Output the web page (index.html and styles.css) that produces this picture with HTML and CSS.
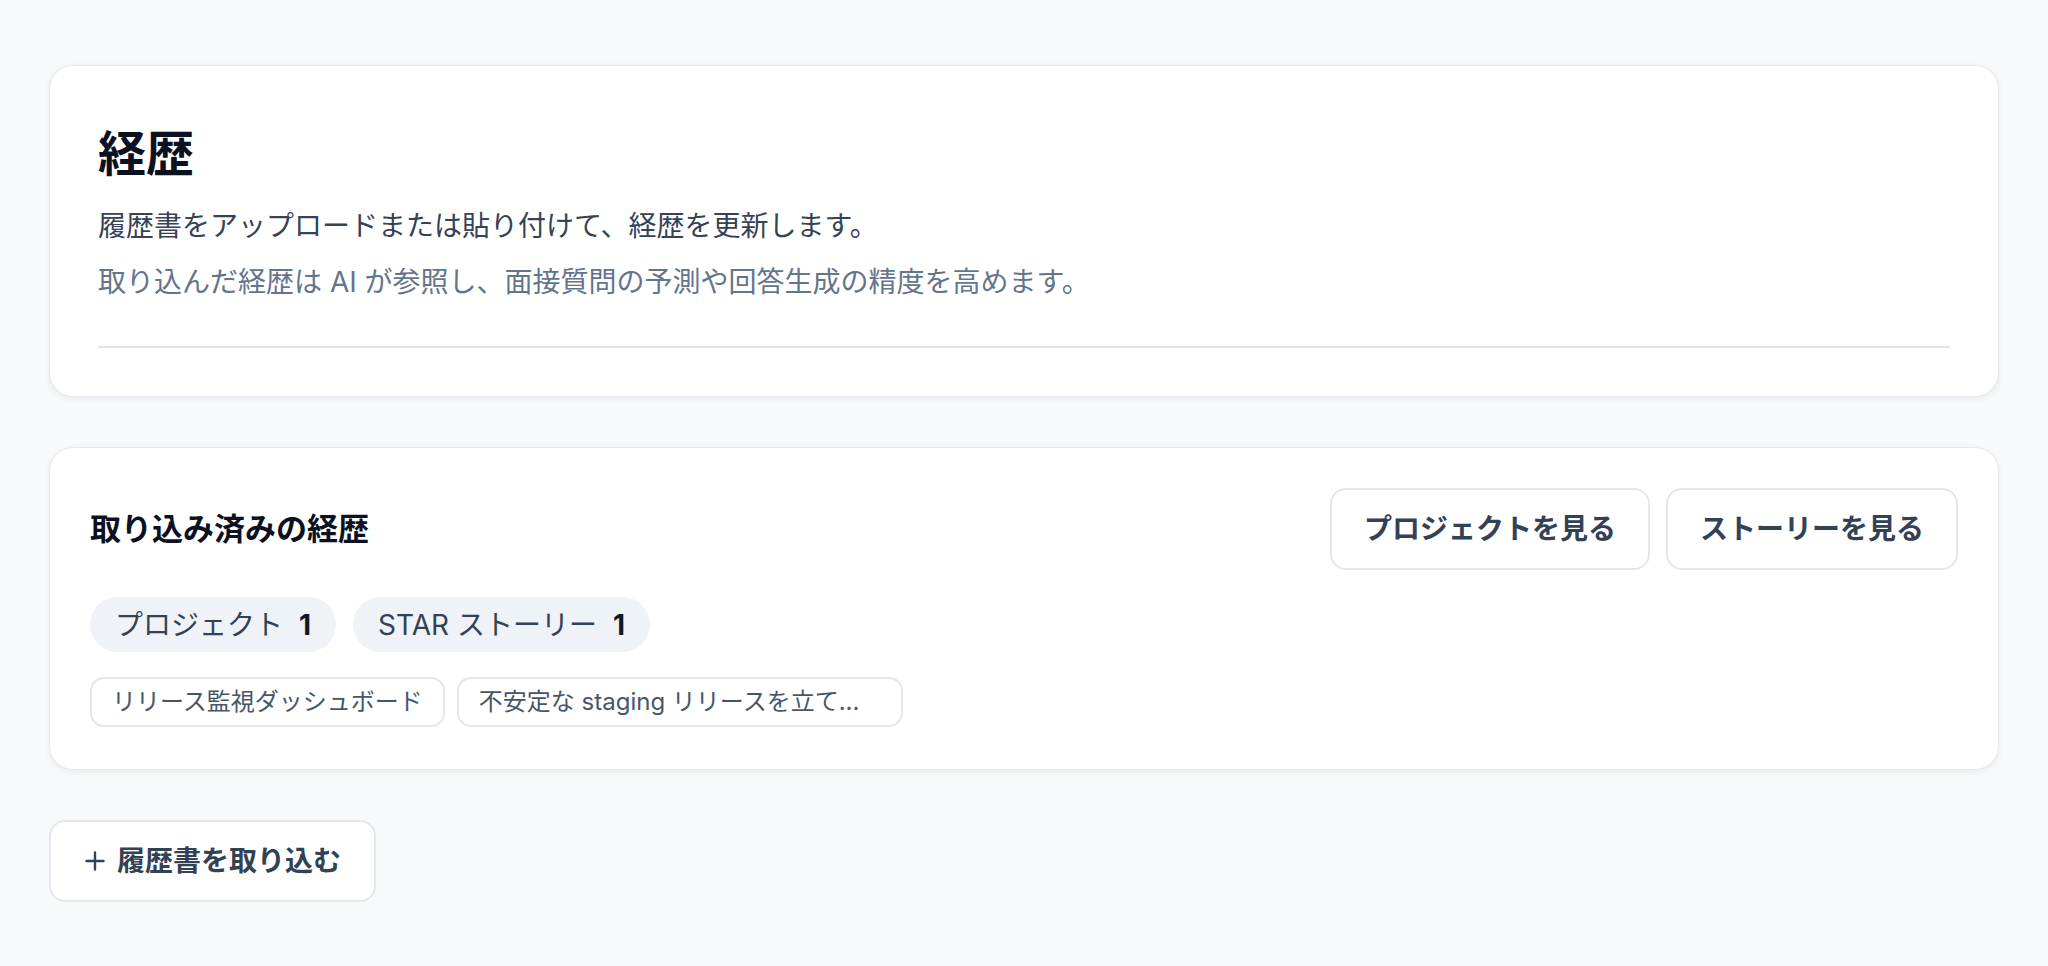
FILE: index.html
```html
<!DOCTYPE html>
<html lang="ja">
<head>
<meta charset="utf-8">
<title>経歴</title>
<link rel="stylesheet" href="styles.css">
</head>
<body>
<main class="page">
  <section class="card card--intro">
    <h1 class="title">経歴</h1>
    <p class="lead">履歴書をアップロードまたは貼り付けて、経歴を更新します。</p>
    <p class="note">取り込んだ経歴は AI が参照し、面接質問の予測や回答生成の精度を高めます。</p>
    <hr class="divider">
  </section>

  <section class="card card--imported">
    <div class="imported-head">
      <h2 class="subtitle">取り込み済みの経歴</h2>
      <div class="actions">
        <button class="btn">プロジェクトを見る</button>
        <button class="btn">ストーリーを見る</button>
      </div>
    </div>
    <div class="pills">
      <span class="pill">プロジェクト<span class="pill-count">1</span></span>
      <span class="pill">STAR ストーリー<span class="pill-count">1</span></span>
    </div>
    <div class="tags">
      <span class="tag">リリース監視ダッシュボード</span>
      <span class="tag tag--wide">不安定な staging リリースを立て...</span>
    </div>
  </section>

  <div class="footer-actions">
    <button class="btn btn--import"><svg class="plus" viewBox="0 0 20 20" width="20" height="20" aria-hidden="true"><path d="M10 1.5v17M1.5 10h17" stroke="currentColor" stroke-width="2.4" stroke-linecap="round" fill="none"/></svg>履歴書を取り込む</button>
  </div>
</main>
</body>
</html>
```

FILE: styles.css
```css
* {
  box-sizing: border-box;
}

html, body {
  margin: 0;
  padding: 0;
  background: #f8f9fb;
}

body {
  font-family: "Inter", "Noto Sans CJK JP", sans-serif;
  color: #0f172a;
}

.page {
  padding: 65px 49px 40px;
  display: flex;
  flex-direction: column;
  align-items: stretch;
}

.card {
  background: #ffffff;
  border: 1px solid #e5e8ee;
  border-radius: 24px;
  box-shadow: 0 2px 6px rgba(15, 23, 42, 0.07);
}

.card--intro {
  padding: 60px 48px 48px;
}

.title {
  margin: 0 0 20px;
  font-size: 48px;
  line-height: 56px;
  font-weight: 700;
  color: #0b1121;
}

.lead,
.note {
  margin: 0;
  font-size: 28px;
  line-height: 48px;
}

.lead {
  color: #364256;
}

.note {
  margin-top: 8px;
  color: #64748b;
}

.divider {
  margin: 40px 0 0;
  border: 0;
  height: 2px;
  background: #e2e6ec;
}

.card--imported {
  margin-top: 50px;
  padding: 40px 40px 42px;
}

.imported-head {
  display: flex;
  align-items: center;
  justify-content: space-between;
  margin-bottom: 27px;
}

.subtitle {
  margin: 0;
  font-size: 31px;
  line-height: 42px;
  font-weight: 700;
  color: #0b1121;
}

.actions {
  display: flex;
  gap: 16px;
}

.btn {
  font-family: inherit;
  font-size: 28px;
  line-height: 42px;
  font-weight: 600;
  color: #334155;
  background: #ffffff;
  border: 2px solid #e3e7ed;
  border-radius: 16px;
  padding: 18px 32px;
  cursor: pointer;
}

.pills {
  display: flex;
  gap: 17px;
  margin-bottom: 25px;
}

.pill {
  display: inline-flex;
  align-items: center;
  height: 55px;
  padding: 0 25px;
  border-radius: 28px;
  background: #eff3f8;
  font-size: 28px;
  line-height: 42px;
  color: #334155;
}

.pill-count {
  margin-left: 16px;
  font-weight: 700;
  color: #0f172a;
}

.tags {
  display: flex;
  gap: 12px;
}

.tag {
  display: inline-block;
  padding: 5px 20px;
  border: 2px solid #e3e7ed;
  border-radius: 14px;
  font-size: 24px;
  line-height: 36px;
  color: #475569;
  white-space: nowrap;
}

.tag--wide {
  width: 446px;
}

.footer-actions {
  margin-top: 50px;
  display: flex;
}

.btn--import {
  display: inline-flex;
  align-items: center;
  gap: 12px;
  padding: 18px 33px 18px 34px;
}

.plus {
  display: block;
  flex: none;
}
```
